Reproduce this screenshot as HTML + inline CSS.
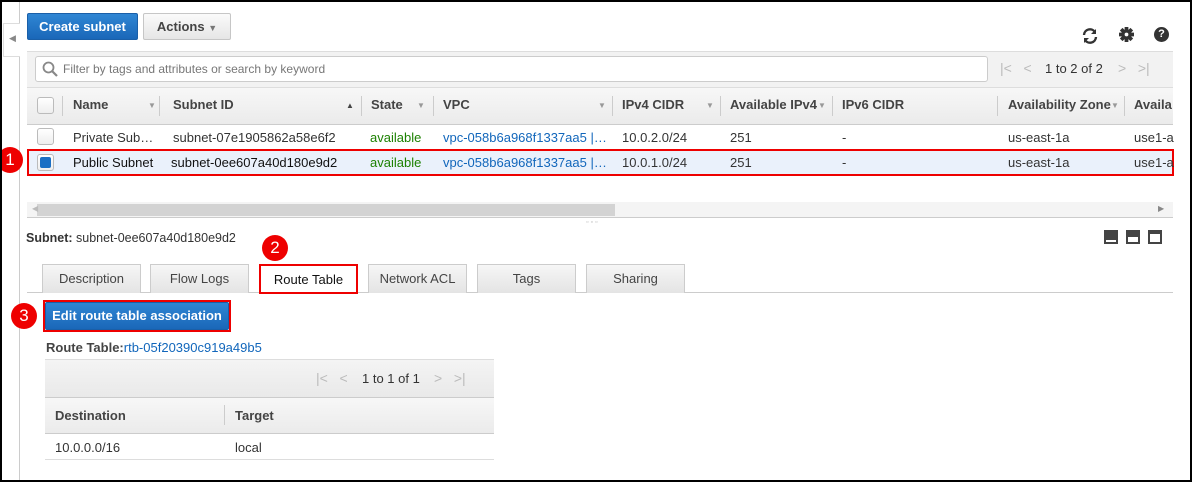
<!DOCTYPE html>
<html><head><meta charset="utf-8"><style>
*{box-sizing:border-box;margin:0;padding:0}
body{width:1192px;height:482px;overflow:hidden;background:#fff;font-family:"Liberation Sans",Arial,sans-serif;font-size:13px;color:#333;position:relative}
.a{position:absolute;white-space:nowrap}
.frame{position:absolute;left:0;top:0;width:1192px;height:482px;border:2px solid #000;z-index:50;pointer-events:none}
.btn{position:absolute;border-radius:2px;font-weight:bold;font-size:13px;text-align:center}
.blue{background:linear-gradient(#2f86d4,#1a67b8);color:#fff;border:1px solid #1a5fa8}
.gray{background:linear-gradient(#fafafa,#e6e6e6);border:1px solid #c6c6c6;color:#444}
.hd{position:absolute;top:87px;height:38px;line-height:36px;font-weight:bold;color:#444}
.sep{position:absolute;top:96px;width:1px;height:20px;background:#ccc}
.caret{color:#999;font-size:8px;position:absolute;top:101px}
.cb{position:absolute;width:17px;height:17px;border:1px solid #bbb;border-radius:3px;background:linear-gradient(#fff,#eee)}
.circ{position:absolute;width:26px;height:26px;border-radius:50%;background:#e00;color:#fff;text-align:center;line-height:26px;font-size:17px}
.tab{position:absolute;top:264px;height:29px;width:99px;background:linear-gradient(#f6f6f6,#e4e4e4);border:1px solid #ccc;border-bottom:none;text-align:center;line-height:28px;color:#444}
.pi{position:absolute;top:230px;width:14px;height:14px;background:#444}
</style></head><body>
<div class="frame"></div>
<div class="a" style="left:19px;top:2px;width:1px;height:478px;background:#ccc"></div>
<div class="a" style="left:3px;top:23px;width:17px;height:34px;border:1px solid #ddd;border-right:none;background:#fff"></div>
<div class="a" style="left:9px;top:33px;color:#888;font-size:9px">◀</div>

<div class="btn blue" style="left:27px;top:13px;width:111px;height:27px;line-height:25px">Create subnet</div>
<div class="btn gray" style="left:143px;top:13px;width:88px;height:27px;line-height:25px">Actions <span style="font-size:9px;color:#777">▼</span></div>

<svg class="a" style="left:1081px;top:27px" width="18" height="18" viewBox="0 0 18 18"><path d="M3 8a6 6 0 0 1 11-3" fill="none" stroke="#333" stroke-width="2.4"/><path d="M15 2v5h-5z" fill="#333"/><path d="M15 10a6 6 0 0 1-11 3" fill="none" stroke="#333" stroke-width="2.4"/><path d="M3 16v-5h5z" fill="#333"/></svg>
<svg class="a" style="left:1119px;top:27px" width="15" height="15" viewBox="0 0 16 16"><g fill="#333"><rect x="6" y="0" width="4" height="16"/><rect x="0" y="6" width="16" height="4"/><rect x="6" y="0" width="4" height="16" transform="rotate(45 8 8)"/><rect x="6" y="0" width="4" height="16" transform="rotate(-45 8 8)"/><circle cx="8" cy="8" r="5.5"/></g><circle cx="8" cy="8" r="2" fill="#fff"/></svg>
<div class="a" style="left:1154px;top:27px;width:15px;height:15px;border-radius:50%;background:#333;color:#fff;font-weight:bold;font-size:11px;text-align:center;line-height:15px">?</div>

<div class="a" style="left:27px;top:51px;width:1146px;height:36px;background:#f2f2f2;border-top:1px solid #ddd"></div>
<div class="a" style="left:35px;top:56px;width:953px;height:26px;background:#fff;border:1px solid #ccc;border-radius:3px"></div>
<svg class="a" style="left:42px;top:61px" width="16" height="16" viewBox="0 0 16 16"><circle cx="6.5" cy="6.5" r="5" fill="none" stroke="#888" stroke-width="1.8"/><path d="M10 10l5 5" stroke="#888" stroke-width="2.2"/></svg>
<div class="a" style="left:63px;top:62px;color:#777;font-size:12px">Filter by tags and attributes or search by keyword</div>
<div class="a" style="left:1000px;top:60px;color:#bbb;font-size:14px">|&lt;&nbsp;&nbsp;&nbsp;&lt;</div>
<div class="a" style="left:1045px;top:61px;color:#333;font-size:13px">1 to 2 of 2</div>
<div class="a" style="left:1118px;top:60px;color:#bbb;font-size:14px">&gt;&nbsp;&nbsp;&nbsp;&gt;|</div>

<div class="a" style="left:27px;top:87px;width:1146px;height:38px;background:linear-gradient(#f7f7f7,#ebebeb);border-top:1px solid #ddd;border-bottom:1px solid #ccc"></div>
<div class="cb" style="left:37px;top:97px"></div>
<div class="sep" style="left:62px"></div><div class="sep" style="left:159px"></div><div class="sep" style="left:361px"></div><div class="sep" style="left:433px"></div><div class="sep" style="left:612px"></div><div class="sep" style="left:720px"></div><div class="sep" style="left:832px"></div><div class="sep" style="left:997px"></div><div class="sep" style="left:1124px"></div>
<div class="hd" style="left:73px">Name</div><div class="caret" style="left:148px">▼</div>
<div class="hd" style="left:173px">Subnet ID</div><div class="caret" style="left:346px;color:#444">▲</div>
<div class="hd" style="left:371px">State</div><div class="caret" style="left:417px">▼</div>
<div class="hd" style="left:443px">VPC</div><div class="caret" style="left:598px">▼</div>
<div class="hd" style="left:622px">IPv4 CIDR</div><div class="caret" style="left:706px">▼</div>
<div class="hd" style="left:730px">Available IPv4</div><div class="caret" style="left:818px">▼</div>
<div class="hd" style="left:842px">IPv6 CIDR</div>
<div class="hd" style="left:1008px">Availability Zone</div><div class="caret" style="left:1111px">▼</div>
<div class="hd" style="left:1134px">Availa</div>

<div class="a" style="left:27px;top:149px;width:1146px;height:1px;background:#e4e4e4"></div>
<div class="cb" style="left:37px;top:128px"></div>
<div class="a" style="left:73px;top:130px">Private Sub…</div>
<div class="a" style="left:173px;top:130px">subnet-07e1905862a58e6f2</div>
<div class="a" style="left:370px;top:130px;color:#1d8102">available</div>
<div class="a" style="left:443px;top:130px;color:#1166bb">vpc-058b6a968f1337aa5 |…</div>
<div class="a" style="left:622px;top:130px">10.0.2.0/24</div>
<div class="a" style="left:730px;top:130px">251</div>
<div class="a" style="left:842px;top:130px">-</div>
<div class="a" style="left:1008px;top:130px">us-east-1a</div>
<div class="a" style="left:1134px;top:130px">use1-a</div>

<div class="a" style="left:27px;top:149px;width:1147px;height:27px;background:#eaf1fb;border:2px solid #e00"></div>
<div class="cb" style="left:37px;top:154px"></div>
<div class="a" style="left:40px;top:157px;width:11px;height:11px;background:#1a6fc4;border-radius:2px"></div>
<div class="a" style="left:73px;top:155px;color:#111">Public Subnet</div>
<div class="a" style="left:171px;top:155px;color:#111">subnet-0ee607a40d180e9d2</div>
<div class="a" style="left:370px;top:155px;color:#1d8102">available</div>
<div class="a" style="left:443px;top:155px;color:#1166bb">vpc-058b6a968f1337aa5 |…</div>
<div class="a" style="left:622px;top:155px">10.0.1.0/24</div>
<div class="a" style="left:730px;top:155px">251</div>
<div class="a" style="left:842px;top:155px">-</div>
<div class="a" style="left:1008px;top:155px">us-east-1a</div>
<div class="a" style="left:1134px;top:155px">use1-a</div>
<div class="circ" style="left:-3px;top:147px">1</div>

<div class="a" style="left:27px;top:202px;width:1146px;height:16px;background:#f4f4f4;border-bottom:1px solid #ccc"></div>
<div class="a" style="left:37px;top:204px;width:578px;height:12px;background:#d3d3d3"></div>
<div class="a" style="left:32px;top:204px;color:#bbb;font-size:8px">◀</div>
<div class="a" style="left:1158px;top:204px;color:#888;font-size:8px">▶</div>
<div class="a" style="left:586px;top:219px;color:#bbb;font-size:7px;letter-spacing:2px">▫▫▫</div>

<div class="a" style="left:26px;top:231px;font-size:12.5px"><b>Subnet:</b> subnet-0ee607a40d180e9d2</div>
<div class="pi" style="left:1104px"><div style="position:absolute;left:2px;bottom:2px;width:10px;height:2px;background:#fff"></div></div>
<div class="pi" style="left:1126px"><div style="position:absolute;left:2px;bottom:2px;width:10px;height:5px;background:#fff"></div></div>
<div class="pi" style="left:1148px"><div style="position:absolute;left:2px;bottom:2px;width:10px;height:8px;background:#fff"></div></div>

<div class="a" style="left:27px;top:292px;width:1146px;height:1px;background:#ccc"></div>
<div class="tab" style="left:42px">Description</div>
<div class="tab" style="left:150px">Flow Logs</div>
<div class="tab" style="left:259px;background:#fff;border:2px solid #e00;height:30px;color:#111">Route Table</div>
<div class="tab" style="left:368px">Network ACL</div>
<div class="tab" style="left:477px">Tags</div>
<div class="tab" style="left:586px">Sharing</div>
<div class="circ" style="left:262px;top:235px">2</div>

<div class="a" style="left:43px;top:300px;width:188px;height:32px;border:2px solid #e00"></div>
<div class="btn blue" style="left:45px;top:302px;width:184px;height:28px;line-height:26px">Edit route table association</div>
<div class="circ" style="left:11px;top:303px">3</div>

<div class="a" style="left:46px;top:340px;font-weight:bold;color:#444">Route Table:<span style="font-weight:normal;color:#1166bb">rtb-05f20390c919a49b5</span></div>

<div class="a" style="left:45px;top:359px;width:449px;height:38px;background:linear-gradient(#f4f4f4,#e9e9e9);border-top:1px solid #ddd"></div>
<div class="a" style="left:316px;top:370px;color:#bbb;font-size:14px">|&lt;&nbsp;&nbsp;&nbsp;&lt;</div>
<div class="a" style="left:362px;top:371px;color:#333">1 to 1 of 1</div>
<div class="a" style="left:434px;top:370px;color:#bbb;font-size:14px">&gt;&nbsp;&nbsp;&nbsp;&gt;|</div>
<div class="a" style="left:45px;top:397px;width:449px;height:37px;background:linear-gradient(#f7f7f7,#ebebeb);border-top:1px solid #ccc;border-bottom:1px solid #ccc"></div>
<div class="a" style="left:224px;top:405px;width:1px;height:20px;background:#ccc"></div>
<div class="a" style="left:55px;top:408px;font-weight:bold;color:#444">Destination</div>
<div class="a" style="left:235px;top:408px;font-weight:bold;color:#444">Target</div>
<div class="a" style="left:55px;top:440px">10.0.0.0/16</div>
<div class="a" style="left:235px;top:440px">local</div>
<div class="a" style="left:45px;top:459px;width:449px;height:1px;background:#ddd"></div>
</body></html>
